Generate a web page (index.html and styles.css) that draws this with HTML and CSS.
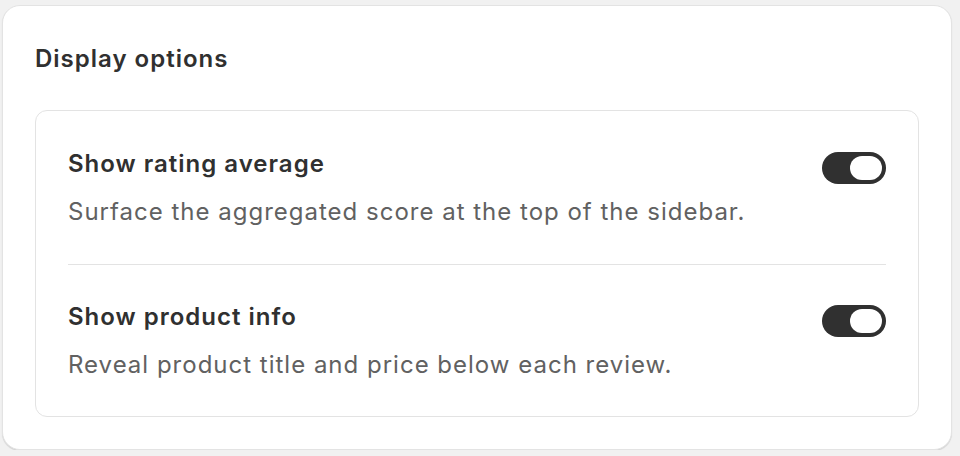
FILE: index.html
```html
<!DOCTYPE html>
<html lang="en">
<head>
  <meta charset="UTF-8">
  <meta name="viewport" content="width=device-width, initial-scale=1.0">
  <title>Display options</title>
  <link rel="stylesheet" href="styles.css">
</head>
<body>
  <div class="card">
    <h2 class="card-title">Display options</h2>
    <div class="settings">
      <div class="setting">
        <div class="setting-text">
          <p class="setting-label">Show rating average</p>
          <p class="setting-help">Surface the aggregated score at the top of the sidebar.</p>
        </div>
        <button class="toggle is-on" aria-pressed="true"><span class="knob"></span></button>
      </div>
      <div class="divider"></div>
      <div class="setting">
        <div class="setting-text">
          <p class="setting-label">Show product info</p>
          <p class="setting-help">Reveal product title and price below each review.</p>
        </div>
        <button class="toggle is-on" aria-pressed="true"><span class="knob"></span></button>
      </div>
    </div>
  </div>
</body>
</html>
```

FILE: styles.css
```css
body {
  font-family: Inter, "Noto Sans", Arial, sans-serif;
  margin: 0;
  padding: 5px 8px 0 2px;
  background: #f1f1f1;
  color: #303030;
  letter-spacing: 1px;
}
.card {
  background: #ffffff;
  border: 1px solid #e3e3e3;
  border-radius: 18px;
  box-shadow: 0 1px 1px rgba(0, 0, 0, 0.12);
  padding: 32px;
  display: flex;
  flex-direction: column;
  gap: 31px;
}
.card-title {
  margin: 1px 0 0;
  font-size: 24px;
  line-height: 40px;
  font-weight: 600;
}
.settings {
  border: 1px solid #e3e3e3;
  border-radius: 12px;
  padding: 33px 32px 31px;
  display: flex;
  flex-direction: column;
  gap: 32px;
}
.setting {
  display: flex;
  justify-content: space-between;
  align-items: flex-start;
  gap: 24px;
}
.setting-text {
  display: flex;
  flex-direction: column;
  gap: 8px;
}
.setting-label {
  margin: 0;
  font-size: 24px;
  line-height: 40px;
  font-weight: 600;
  color: #303030;
}
.setting-help {
  margin: 0;
  font-size: 24px;
  line-height: 40px;
  color: #616161;
}
.divider {
  height: 1px;
  background: #e3e3e3;
}
.toggle {
  flex-shrink: 0;
  width: 64px;
  height: 32px;
  margin-top: 8px;
  padding: 4px;
  border: none;
  border-radius: 16px;
  background: #303030;
  display: flex;
  justify-content: flex-start;
  cursor: pointer;
}
.toggle.is-on {
  justify-content: flex-end;
}
.knob {
  width: 32px;
  height: 24px;
  border-radius: 12px;
  background: #ffffff;
}
```
